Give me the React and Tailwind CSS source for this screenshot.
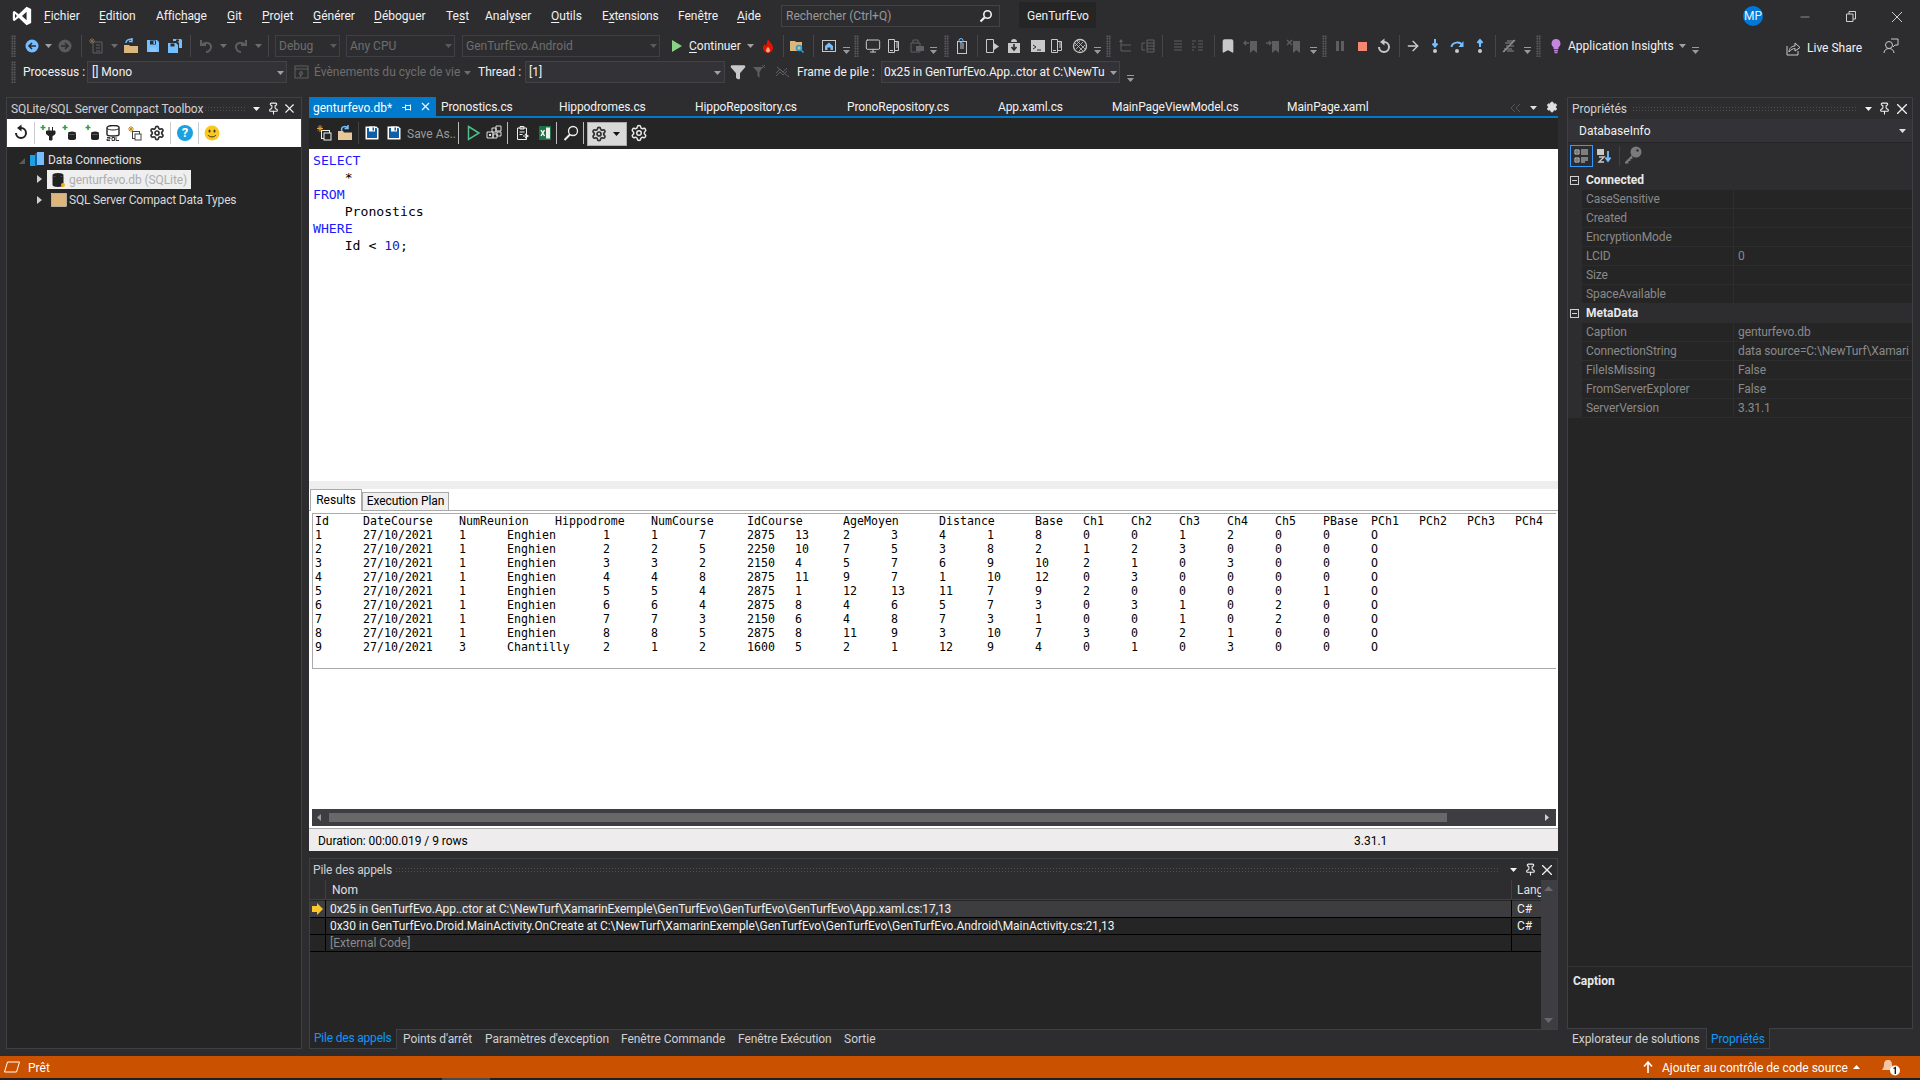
import React from "react";
import { ArrowRight, Bookmark, Monitor, Settings, Pin, X, Minus, Filter } from "lucide-react";

const T = ({ c, children }) => <span className={"absolute whitespace-nowrap leading-[16px] " + c}>{children}</span>;
const Ic = ({ c, children, vb = "0 0 16 16" }) => (
  <svg className={"absolute w-[16px] h-[16px] " + c} viewBox={vb} fill="none">{children}</svg>
);
const Caret = ({ c, col = "#a0a0a0" }) => (
  <svg className={"absolute w-[7px] h-[4px] " + c} viewBox="0 0 7 4"><polygon points="0,0 7,0 3.5,4" fill={col} /></svg>
);
const Mc = ({ c }) => (
  <svg className={"absolute w-[7px] h-[7px] " + c} viewBox="0 0 7 7"><rect x="0" y="0" width="7" height="1" fill="#9a9a9a" /><polygon points="0,3 7,3 3.5,7" fill="#9a9a9a" /></svg>
);
const Sep = ({ c, col = "bg-[#46464a]" }) => <div className={"absolute w-[1px] h-[22px] " + col + " " + c} />;
const Grip = ({ c }) => <div className={"absolute w-[5px] h-[22px] bg-[radial-gradient(circle,#5f5f63_0.8px,transparent_0.9px)] bg-[length:2.5px_2.5px] " + c} />;
const DotFill = ({ c }) => <div className={"absolute h-[7px] bg-[radial-gradient(circle,#505054_0.7px,transparent_0.8px)] bg-[length:3px_3px] " + c} />;
const U = ({ children }) => <span className="underline underline-offset-[2px] decoration-[1px]">{children}</span>;
const Restart = ({ c, col }) => (
  <Ic c={c}><path d="M8 4a5 5 0 1 1-5 5" stroke={col} strokeWidth="2" /><polygon points="8.500,0.500 8.500,7.500 4,4" fill={col} /></Ic>
);
const Floppy = ({ c, col = "#75beff" }) => (
  <Ic c={c}><path d="M2 2h10l2 2v10H2z" fill={col} /><rect x="5" y="2.5" width="6" height="4" fill="#2d2d30" /><rect x="8.5" y="3" width="1.5" height="3" fill={col} /><rect x="4.5" y="9.5" width="7" height="4.5" fill="#fff" opacity="0.15" /></Ic>
);
const SaveDark = ({ c }) => (
  <Ic c={c}><path d="M1.5 1.5h11l2 2v11h-13z" fill="#fff" /><path d="M3 3h9.5l.5.5V13H3z" fill="#0e5ea8" /><rect x="5" y="1.5" width="6" height="5" fill="#fff" /><rect x="8.5" y="2.5" width="1.5" height="3" fill="#0e5ea8" /><rect x="4.5" y="9" width="7" height="4" fill="#0e5ea8" /></Ic>
);
const GearI = ({ c, col = "#333" }) => (
  <Settings className={"absolute " + c} size={16} color={col} strokeWidth={2.6} />
);
const GreenPlus = () => <path d="M3 0v5M.5 2.500h5" stroke="#2ea043" strokeWidth="1.600" />;
const PhoneSplit = ({ c, col = "#c8c8c8" }) => (
  <Ic c={c}><path d="M3.5 1.5h6v13h-6zM9.5 3.5h4v9h-4z" stroke={col} /><path d="M5 12.5h3M11 5h2M11 7h2M11 9h2" stroke={col} /></Ic>
);

const header = { 0: "Id", 1: "DateCourse", 3: "NumReunion", 5: "Hippodrome", 7: "NumCourse", 9: "IdCourse", 11: "AgeMoyen", 13: "Distance", 15: "Base", 16: "Ch1", 17: "Ch2", 18: "Ch3", 19: "Ch4", 20: "Ch5", 21: "PBase", 22: "PCh1", 23: "PCh2", 24: "PCh3", 25: "PCh4" };
const rows = [
  "1,1,Enghien,1,1,7,2875,13,2,3,4,1,8,0,0,1,2,0,0,O",
  "2,1,Enghien,2,2,5,2250,10,7,5,3,8,2,1,2,3,0,0,0,O",
  "3,1,Enghien,3,3,2,2150,4,5,7,6,9,10,2,1,0,3,0,0,O",
  "4,1,Enghien,4,4,8,2875,11,9,7,1,10,12,0,3,0,0,0,0,O",
  "5,1,Enghien,5,5,4,2875,1,12,13,11,7,9,2,0,0,0,0,1,O",
  "6,1,Enghien,6,6,4,2875,8,4,6,5,7,3,0,3,1,0,2,0,O",
  "7,1,Enghien,7,7,3,2150,6,4,8,7,3,1,0,0,1,0,2,0,O",
  "8,1,Enghien,8,8,5,2875,8,11,9,3,10,7,3,0,2,1,0,0,O",
  "9,3,Chantilly,2,1,2,1600,5,2,1,12,9,4,0,1,0,3,0,0,O",
];
const GridRow = ({ cells }) => (
  <div className="grid grid-cols-[repeat(26,48px)] h-[14px] leading-[14px]">
    {Array.from({ length: 26 }, (_, i) => <span key={i} className="whitespace-pre overflow-visible">{cells[i] || ""}</span>)}
  </div>
);
const toCells = (s) => {
  const p = s.split(",");
  const out = { 0: p[0], 1: "27/10/2021", 3: p[1], 4: p[2] };
  p.slice(3).forEach((v, i) => { out[6 + i] = v; });
  return out;
};

function Header() {
  const menu = "text-[12px] text-[#f1f1f1]";
  return (
    <div className="relative h-[97px] text-[12px] text-[#f1f1f1]">
      <svg className="absolute left-[11px] top-[6px] w-[22px] h-[20px]" viewBox="0 0 24 24"><path fillRule="evenodd" d="M17.5 1 23 3.5v17L17.5 23 8 14.2 3 18l-2-1V7l2-1 5 3.8zM17.5 7 12 12l5.5 5zM3.6 9.4v5.2L6 12z" fill="#fff" /></svg>
      <T c={"left-[44px] top-[8px] " + menu}><U>F</U>ichier</T>
      <T c={"left-[99px] top-[8px] " + menu}><U>E</U>dition</T>
      <T c={"left-[156px] top-[8px] tracking-[-0.1px] " + menu}>Affic<U>h</U>age</T>
      <T c={"left-[227px] top-[8px] " + menu}><U>G</U>it</T>
      <T c={"left-[262px] top-[8px] " + menu}><U>P</U>rojet</T>
      <T c={"left-[313px] top-[8px] " + menu}><U>G</U>énérer</T>
      <T c={"left-[374px] top-[8px] " + menu}><U>D</U>éboguer</T>
      <T c={"left-[446px] top-[8px] " + menu}>Te<U>s</U>t</T>
      <T c={"left-[485px] top-[8px] " + menu}>Anal<U>y</U>ser</T>
      <T c={"left-[551px] top-[8px] " + menu}><U>O</U>utils</T>
      <T c={"left-[602px] top-[8px] tracking-[-0.2px] " + menu}>E<U>x</U>tensions</T>
      <T c={"left-[678px] top-[8px] " + menu}>Fenê<U>t</U>re</T>
      <T c={"left-[737px] top-[8px] " + menu}><U>A</U>ide</T>
      <div className="absolute left-[781px] top-[5px] w-[219px] h-[22px] border border-[#434346]" />
      <T c="left-[786px] top-[8px] text-[#999]">Rechercher (Ctrl+Q)</T>
      <svg className="absolute left-[979px] top-[9px] w-[14px] h-[14px]" viewBox="0 0 14 14" fill="none"><circle cx="8.5" cy="5.5" r="3.7" stroke="#f1f1f1" strokeWidth="1.6" /><path d="M5.5 8.5 1.5 12.5" stroke="#f1f1f1" strokeWidth="2.2" /></svg>
      <div className="absolute left-[1019px] top-[2px] w-[77px] h-[26px] bg-[#252526]" />
      <T c="left-[1027px] top-[8px]">GenTurfEvo</T>
      <div className="absolute left-[1743px] top-[6px] w-[20px] h-[20px] rounded-full bg-[#0078d7] flex items-center justify-center text-[12px] text-[#e8f2fb]">MP</div>
      <Minus className="absolute left-[1798px] top-[10px]" size={14} color="#d0d0d0" strokeWidth={1} />
      <svg className="absolute left-[1846px] top-[11px] w-[10px] h-[11px]" viewBox="0 0 10 11" fill="none"><path d="M.5 3h6.5v7.5H.5zM3 3V.5h6.5V8H7" stroke="#d0d0d0" /></svg>
      <svg className="absolute left-[1892px] top-[12px] w-[10px] h-[10px]" viewBox="0 0 10 10" fill="none"><path d="M0 0l10 10M10 0 0 10" stroke="#d0d0d0" /></svg>

      {/* toolbar row 1 */}
      <Grip c="left-[11px] top-[35px]" />
      <Ic c="left-[24px] top-[38px]"><circle cx="8" cy="8" r="6.5" fill="#75beff" /><path d="M12 8H5M8 5 5 8l3 3" stroke="#2d2d30" strokeWidth="1.6" /></Ic>
      <Caret c="left-[45px] top-[44px]" />
      <Ic c="left-[57px] top-[38px]"><circle cx="8" cy="8" r="6.5" fill="#5a5a5c" /><path d="M4 8h7M8 5l3 3-3 3" stroke="#2d2d30" strokeWidth="1.6" /></Ic>
      <Sep c="left-[81px] top-[35px]" />
      <Ic c="left-[88px] top-[38px]"><path d="M5 4h9v11H5z" stroke="#606062" /><path d="M8 7h4M8 10h4M8 13h4" stroke="#606062" /><path d="M4 0v6M1 3h6M2 1l4 4M6 1 2 5" stroke="#7a6a4a" /></Ic>
      <Caret c="left-[111px] top-[44px]" col="#6d6d6d" />
      <Ic c="left-[123px] top-[38px]"><path d="M1 7h5l1 1h8v7H1z" fill="#dcb67a" /><path d="M3 5c0-3 3-4 6-3.5M9 0v3.5h-3" stroke="#75beff" strokeWidth="1.5" /></Ic>
      <Floppy c="left-[145px] top-[38px]" />
      <Ic c="left-[167px] top-[38px]"><path d="M1 5h8l2 2v8H1z" fill="#75beff" /><rect x="3.5" y="5.5" width="4" height="3" fill="#2d2d30" /><path d="M6 1h8l1 1v8h-3V5L10 3H6z" fill="#75beff" /><rect x="9" y="1.5" width="3" height="2" fill="#2d2d30" /></Ic>
      <Sep c="left-[190px] top-[35px]" />
      <Ic c="left-[198px] top-[38px]"><path d="M3 2v5h5M4 7c2-3 8-3 9 1 .6 3-2 6-5 6" stroke="#5e5e60" strokeWidth="2" /></Ic>
      <Caret c="left-[220px] top-[44px]" col="#6d6d6d" />
      <Ic c="left-[233px] top-[38px]"><path d="M13 2v5H8M12 7c-2-3-8-3-9 1-.6 3 2 6 5 6" stroke="#5e5e60" strokeWidth="2" /></Ic>
      <Caret c="left-[255px] top-[44px]" col="#6d6d6d" />
      <Sep c="left-[268px] top-[35px]" />
      <div className="absolute left-[275px] top-[35px] w-[65px] h-[22px] border border-[#3f3f46]" />
      <T c="left-[279px] top-[38px] text-[#6d6d6d]">Debug</T>
      <Caret c="left-[330px] top-[44px]" col="#5a5a5a" />
      <div className="absolute left-[346px] top-[35px] w-[109px] h-[22px] border border-[#3f3f46]" />
      <T c="left-[350px] top-[38px] text-[#6d6d6d]">Any CPU</T>
      <Caret c="left-[445px] top-[44px]" col="#5a5a5a" />
      <div className="absolute left-[462px] top-[35px] w-[198px] h-[22px] border border-[#3f3f46]" />
      <T c="left-[466px] top-[38px] text-[#6d6d6d]">GenTurfEvo.Android</T>
      <Caret c="left-[650px] top-[44px]" col="#5a5a5a" />
      <svg className="absolute left-[672px] top-[40px] w-[10px] h-[12px]" viewBox="0 0 10 12"><polygon points="0,0 10,6 0,12" fill="#89d185" /></svg>
      <T c="left-[689px] top-[38px]"><U>C</U>ontinuer</T>
      <Caret c="left-[747px] top-[44px]" />
      <Ic c="left-[760px] top-[38px]"><path d="M8 1c1 3 5 5 5 9a5 5 0 0 1-10 0c0-2 1-3 2-4 0 1 .5 2 1 2 1-2 1-5 2-7z" fill="#e51400" /><path d="M8 9c1 1 2 2 2 3.5a2 2 0 0 1-4 0C6 11 7 10 8 9z" fill="#f4a58a" /></Ic>
      <Sep c="left-[783px] top-[35px]" />
      <Ic c="left-[789px] top-[38px]"><path d="M1 3h5l1 1h6v9H1z" fill="#dcb67a" /><circle cx="10" cy="10" r="2.5" stroke="#1ba1e2" strokeWidth="1.6" /><path d="M12 12l2.5 2.5" stroke="#1ba1e2" strokeWidth="1.6" /></Ic>
      <Sep c="left-[813px] top-[35px]" />
      <Ic c="left-[821px] top-[38px]"><rect x="1.5" y="2.5" width="13" height="11" stroke="#c8c8c8" /><path d="M8 4.5 4 8v4h2.5V9.5h3V12H12V8z" fill="#75beff" /></Ic>
      <Mc c="left-[843px] top-[47px]" />
      <Grip c="left-[854px] top-[35px]" />
      <Monitor className="absolute left-[865px] top-[38px]" size={16} color="#c8c8c8" strokeWidth={1.5} />
      <PhoneSplit c="left-[885px] top-[38px]" />
      <Ic c="left-[909px] top-[38px]"><path d="M2 5h9v9H2zM4 5V2h5v3" stroke="#606062" /><rect x="7" y="8" width="8" height="5" fill="#606062" /></Ic>
      <Mc c="left-[930px] top-[47px]" />
      <Grip c="left-[944px] top-[35px]" />
      <Ic c="left-[954px] top-[38px]"><rect x="3.5" y="3.5" width="9" height="12" stroke="#c8c8c8" /><path d="M6 6h4M6 8h4M6 10h4" stroke="#c8c8c8" /><circle cx="7" cy="2.5" r="2" stroke="#75beff" /></Ic>
      <Sep c="left-[977px] top-[35px]" />
      <Ic c="left-[984px] top-[38px]"><path d="M2.5 1.5h7v13h-7z" stroke="#c8c8c8" /><polygon points="10,5 15,8.5 10,12" fill="#c8c8c8" /></Ic>
      <Ic c="left-[1006px] top-[38px]"><path d="M2 5h12v10H2z" fill="#c8c8c8" /><path d="M5 4a3 3 0 0 1 6 0z" fill="#c8c8c8" /><path d="M8 6v5M5.5 9 8 12l2.5-3" stroke="#2d2d30" strokeWidth="1.6" /></Ic>
      <Ic c="left-[1030px] top-[38px]"><rect x="1" y="2" width="14" height="12" fill="#c8c8c8" /><path d="M3 7l3 2-3 2M7 12h4" stroke="#2d2d30" /></Ic>
      <PhoneSplit c="left-[1048px] top-[38px]" />
      <Ic c="left-[1072px] top-[38px]"><circle cx="8" cy="8" r="6.5" stroke="#c8c8c8" strokeWidth="1.3" /><path d="M3 5l8 8M5 3l8 8M8 3 3 8M11 4l-7 7M13 7l-6 6" stroke="#c8c8c8" strokeWidth=".8" /></Ic>
      <Mc c="left-[1094px] top-[47px]" />
      <Grip c="left-[1106px] top-[35px]" />
      <Ic c="left-[1118px] top-[38px]"><path d="M3 3v10h10M3 7h10" stroke="#606062" /><path d="M1 4l2-3 2 3z" fill="#606062" /></Ic>
      <Ic c="left-[1140px] top-[38px]"><path d="M7 2h7v12H7zM7 5h7M7 8h7M7 11h7M5 5H2v7h3" stroke="#606062" /></Ic>
      <Sep c="left-[1162px] top-[35px]" />
      <Ic c="left-[1170px] top-[38px]"><path d="M4 3h8M4 6h8M4 9h8M4 12h8" stroke="#5e5e60" /></Ic>
      <Ic c="left-[1190px] top-[38px]"><path d="M2 3h4M2 6h2M2 9h4M2 12h2M8 3h5M8 6h5M8 9h5M8 12h5" stroke="#5e5e60" /></Ic>
      <Sep c="left-[1214px] top-[35px]" />
      <Bookmark className="absolute left-[1220px] top-[38px]" size={16} color="#c8c8c8" fill="#c8c8c8" />
      <Ic c="left-[1243px] top-[38px]"><path d="M7 3h7v12l-3.5-3L7 15z" fill="#5e5e60" /><path d="M1 5h5M3 3 1 5l2 2" stroke="#5e5e60" strokeWidth="1.3" /></Ic>
      <Ic c="left-[1265px] top-[38px]"><path d="M7 3h7v12l-3.5-3L7 15z" fill="#5e5e60" /><path d="M1 5h5M4 3l2 2-2 2" stroke="#5e5e60" strokeWidth="1.3" /></Ic>
      <Ic c="left-[1286px] top-[38px]"><path d="M7 3h7v12l-3.5-3L7 15z" fill="#5e5e60" /><path d="M1 2l5 5M6 2 1 7" stroke="#5e5e60" strokeWidth="1.3" /></Ic>
      <Mc c="left-[1310px] top-[47px]" />
      <Grip c="left-[1322px] top-[35px]" />
      <div className="absolute left-[1336px] top-[41px] w-[3px] h-[10px] bg-[#5e5e60]" />
      <div className="absolute left-[1341px] top-[41px] w-[3px] h-[10px] bg-[#5e5e60]" />
      <div className="absolute left-[1358px] top-[42px] w-[9px] h-[9px] bg-[#f48771]" />
      <Restart c="left-[1376px] top-[38px]" col="#c8c8c8" />
      <Sep c="left-[1399px] top-[35px]" />
      <ArrowRight className="absolute left-[1405px] top-[38px]" size={16} color="#d0d0d0" strokeWidth={2} />
      <Ic c="left-[1427px] top-[38px]"><path d="M8 1v7M5.5 5.5 8 8.5l2.5-3" stroke="#75beff" strokeWidth="2" /><circle cx="8" cy="13" r="2" fill="#c8c8c8" /></Ic>
      <Ic c="left-[1449px] top-[38px]"><path d="M2.5 9C3 4 11 3 13 7" stroke="#75beff" strokeWidth="2" /><path d="M14.5 3v6h-5z" fill="#75beff" /><circle cx="8" cy="13" r="2" fill="#c8c8c8" /></Ic>
      <Ic c="left-[1472px] top-[38px]"><path d="M8 9V2M5.5 5 8 2l2.500 3" stroke="#75beff" strokeWidth="2" /><circle cx="8" cy="13" r="2" fill="#c8c8c8" /></Ic>
      <Sep c="left-[1495px] top-[35px]" />
      <Ic c="left-[1501px] top-[38px]"><path d="M3 14 13 2M6 13h7M3 11h8M5 8h8M4 5h8M6 3h7" stroke="#8a8a8a" /><path d="M2 14 14 2" stroke="#8a8a8a" strokeWidth="1.5" /></Ic>
      <Mc c="left-[1524px] top-[47px]" />
      <Grip c="left-[1536px] top-[35px]" />
      <Ic c="left-[1548px] top-[38px]"><path d="M8 1a4.5 4.500 0 0 0-2.500 8.200V11h5V9.200A4.500 4.500 0 0 0 8 1z" fill="#c586e0" /><path d="M6 12.500h4M6.500 14.500h3" stroke="#c586e0" strokeWidth="1.300" /></Ic>
      <T c="left-[1568px] top-[38px]">Application Insights</T>
      <Caret c="left-[1679px] top-[44px]" />
      <Mc c="left-[1692px] top-[47px]" />
      <Ic c="left-[1785px] top-[40px]"><path d="M2 6v9h11v-4" stroke="#c8c8c8" /><path d="M4 12c0-4 3-6 6-6V3l5 4.500L10 11V8.500c-2 0-4 1-6 3.500z" stroke="#c8c8c8" /></Ic>
      <T c="left-[1807px] top-[40px]">Live Share</T>
      <Ic c="left-[1883px] top-[38px]"><circle cx="6" cy="7" r="3.500" stroke="#c8c8c8" /><path d="M1 15c0-3 2.500-4.500 5-4.500s5 1.500 5 4.500" stroke="#c8c8c8" /><path d="M8 1h7v6h-3l-2 2" stroke="#c8c8c8" /></Ic>

      {/* toolbar row 2 */}
      <Grip c="left-[11px] top-[61px]" />
      <T c="left-[23px] top-[64px]">Processus :</T>
      <div className="absolute left-[87px] top-[61px] w-[200px] h-[22px] border border-[#434346] bg-[#333337]" />
      <T c="left-[92px] top-[64px]">[] Mono</T>
      <Caret c="left-[277px] top-[71px]" />
      <Ic c="left-[293px] top-[64px]"><rect x="2" y="2" width="13" height="12" stroke="#606062" /><path d="M2 5h13M8 7 6 10h2l-1 3 3-4H8l1-2" stroke="#606062" /></Ic>
      <T c="left-[314px] top-[64px] text-[#6d6d6d]">Évènements du cycle de vie</T>
      <Caret c="left-[464px] top-[71px]" col="#6d6d6d" />
      <T c="left-[478px] top-[64px]">Thread :</T>
      <div className="absolute left-[525px] top-[61px] w-[200px] h-[22px] border border-[#434346] bg-[#333337]" />
      <T c="left-[529px] top-[64px]">[1]</T>
      <Caret c="left-[714px] top-[71px]" />
      <Filter className="absolute left-[730px] top-[64px]" size={16} color="#c8c8c8" fill="#c8c8c8" />
      <Ic c="left-[752px] top-[64px]"><path d="M1 3h10L7.500 8v6l-2-2V8z" fill="#5e5e60" /><path d="M10 1l3 3M13 1l-3 3" stroke="#5e5e60" /></Ic>
      <Ic c="left-[775px] top-[64px]"><path d="M1 9l4-4 3 3 4-4M1 12l4-4 3 3 4-4M2 3l12 10" stroke="#5e5e60" /></Ic>
      <T c="left-[797px] top-[64px]">Frame de pile :</T>
      <div className="absolute left-[881px] top-[61px] w-[239px] h-[22px] border border-[#434346] bg-[#333337]" />
      <T c="left-[884px] top-[64px] tracking-[-0.1px]">0x25 in GenTurfEvo.App..ctor at C:\NewTu</T>
      <Caret c="left-[1110px] top-[71px]" />
      <Mc c="left-[1127px] top-[75px]" />
    </div>
  );
}

function LeftPanel() {
  return (
    <div className="relative w-[296px] h-[952px] ml-[6px] border border-[#3f3f46] bg-[#252526] text-[12px] tracking-[-0.1px]">
      <div className="relative h-[21px] bg-[#2d2d30]">
        <T c="left-[4px] top-[3px] text-[#d0d0d0]">SQLite/SQL Server Compact Toolbox</T>
        <DotFill c="left-[197px] top-[8px] w-[42px]" />
        <Caret c="left-[246px] top-[9px]" col="#f1f1f1" />
        <Pin className="absolute left-[260px] top-[4px]" size={13} color="#f1f1f1" strokeWidth={2} />
        <X className="absolute left-[275px] top-[3px]" size={15} color="#f1f1f1" strokeWidth={1.8} />
      </div>
      <div className="relative h-[28px] bg-white">
        <Restart c="left-[6px] top-[5px]" col="#222" />
        <Sep c="left-[27px] top-[3px]" col="bg-[#ccc]" />
        <Ic c="left-[33px] top-[6px]"><GreenPlus /><path d="M9 2v4M12.500 2v4M6.500 6h8.500v3l-3 2v4h-2.500v-4l-3-2z" fill="#222" stroke="#222" /></Ic>
        <Ic c="left-[55px] top-[6px]"><GreenPlus /><ellipse cx="10" cy="8" rx="4" ry="1.600" fill="#222" /><path d="M6 8v5.500c0 1 1.800 1.500 4 1.500s4-.5 4-1.500V8c0 1-1.800 1.500-4 1.500S6 9 6 8z" fill="#222" /></Ic>
        <Ic c="left-[78px] top-[6px]"><GreenPlus /><ellipse cx="10" cy="8" rx="4" ry="1.600" fill="#222" /><path d="M6 8v5.500c0 1 1.800 1.500 4 1.500s4-.5 4-1.500V8c0 1-1.800 1.500-4 1.500S6 9 6 8z" fill="#222" /></Ic>
        <Ic c="left-[98px] top-[6px]"><path d="M2 2.500C2 1.500 4.500.5 8 .5s6 1 6 2v7c0 1-2.500 1.500-6 1.500s-6-.5-6-1.500z" stroke="#222" strokeWidth="1.400" /><path d="M2 3.500c1 1 4 1.500 6 1.500s5-.5 6-1.500" stroke="#222" /><path d="M2 12.500h3v1.500H2v1.500h3M7 12.500h2.500v3H7zM11 12v3.500h3" stroke="#222" strokeWidth=".9" /></Ic>
        <Ic c="left-[120px] top-[6px]"><rect x="5.500" y="6.500" width="7" height="7" stroke="#444" /><rect x="8" y="9" width="6" height="6" fill="#fff" stroke="#444" /><path d="M4 1v6M1 4h6M2 2l4 4M6 2 2 6" stroke="#c98a10" /></Ic>
        <GearI c="left-[142px] top-[6px]" />
        <Sep c="left-[163px] top-[3px]" col="bg-[#ccc]" />
        <div className="absolute left-[170px] top-[6px] w-[16px] h-[16px] rounded-full bg-[#1ba1e2] text-white text-[13px] font-bold leading-[16px] text-center">?</div>
        <Sep c="left-[191px] top-[3px]" col="bg-[#ccc]" />
        <Ic c="left-[197px] top-[6px]"><circle cx="8" cy="8" r="7.500" fill="#f9c81e" /><ellipse cx="5.500" cy="6" rx="1" ry="1.600" fill="#333" /><ellipse cx="10.500" cy="6" rx="1" ry="1.600" fill="#333" /><path d="M4 10c1.500 2.500 6.500 2.500 8 0" stroke="#333" /></Ic>
      </div>
      <div className="relative">
        <svg className="absolute left-[12px] top-[11px] w-[6px] h-[6px]" viewBox="0 0 6 6"><polygon points="6,0 6,6 0,6" fill="#5a5a5a" /></svg>
        <Ic c="left-[22px] top-[4px]"><rect x="1" y="4" width="7" height="11" fill="#1ba1e2" /><rect x="8" y="1" width="7" height="13" fill="#75beff" /><rect x="6" y="2" width="2" height="13" fill="#0e5ea8" /></Ic>
        <T c="left-[41px] top-[5px] text-[#e0e0e0]">Data Connections</T>
        <svg className="absolute left-[30px] top-[28px] w-[5px] h-[8px]" viewBox="0 0 5 8"><polygon points="0,0 5,4 0,8" fill="#d0d0d0" /></svg>
        <div className="absolute left-[40px] top-[23px] w-[144px] h-[19px] bg-[#efefef]" />
        <Ic c="left-[44px] top-[25px]"><ellipse cx="7" cy="3" rx="5.500" ry="2" fill="#222" /><path d="M1.500 3v10c0 1 2.500 2 5.500 2s5.500-1 5.500-2V3c0 1-2.500 2-5.500 2s-5.500-1-5.500-2z" fill="#222" /><circle cx="12" cy="13" r="2" fill="#f0b400" /></Ic>
        <T c="left-[62px] top-[25px] text-[#aeaeae]">genturfevo.db (SQLite)</T>
        <svg className="absolute left-[30px] top-[49px] w-[5px] h-[8px]" viewBox="0 0 5 8"><polygon points="0,0 5,4 0,8" fill="#d0d0d0" /></svg>
        <Ic c="left-[44px] top-[45px]"><rect x="0.500" y="1.500" width="15" height="13" fill="#dcb67a" stroke="#eee" strokeWidth=".5" /></Ic>
        <T c="left-[62px] top-[45px] text-[#d8d8d8] tracking-[-0.18px]">SQL Server Compact Data Types</T>
      </div>
    </div>
  );
}

function Center() {
  const tab = "top-[2px] text-[#f1f1f1] tracking-[-0.1px]";
  const sqlBlue = "text-[#1a1aff]";
  return (
    <div className="relative w-[1249px] h-[952px] ml-[7px] text-[12px]">
      {/* tabs */}
      <div className="absolute left-0 top-0 w-[127px] h-[19px] bg-[#007acc] text-white">
        <T c="left-[4px] top-[3px]">genturfevo.db*</T>
        <svg className="absolute left-[93px] top-[6px] w-[11px] h-[9px]" viewBox="0 0 11 9" fill="none"><path d="M0 4.500h3M3.500 1.500v6M3.500 2.500h5v4h-5M8.500 1.500v6" stroke="#fff" /></svg>
        <X className="absolute left-[110px] top-[3px]" size={13} color="#fff" strokeWidth={2} />
      </div>
      <T c={"left-[132px] " + tab}>Pronostics.cs</T>
      <T c={"left-[250px] " + tab}>Hippodromes.cs</T>
      <T c={"left-[386px] " + tab}>HippoRepository.cs</T>
      <T c={"left-[538px] " + tab}>PronoRepository.cs</T>
      <T c={"left-[689px] " + tab}>App.xaml.cs</T>
      <T c={"left-[803px] " + tab}>MainPageViewModel.cs</T>
      <T c={"left-[978px] " + tab}>MainPage.xaml</T>
      <svg className="absolute left-[1202px] top-[7px] w-[10px] h-[8px]" viewBox="0 0 10 8" fill="none"><path d="M4 0 0 4l4 4M9 0 5 4l4 4" stroke="#555" /></svg>
      <Caret c="left-[1221px] top-[9px]" col="#e0e0e0" />
      <Settings className="absolute left-[1237px] top-[4px]" size={12} color="#e0e0e0" fill="#e0e0e0" strokeWidth={2} />
      <div className="absolute left-0 top-[19px] w-[1249px] h-[2px] bg-[#007acc]" />
      {/* editor toolbar */}
      <div className="absolute left-0 top-[21px] w-[1249px] h-[31px] bg-[#252526]">
        <Ic c="left-[7px] top-[7px]"><rect x="5.500" y="5.500" width="8" height="8" stroke="#eee" /><rect x="8" y="8" width="7" height="7" fill="#252526" stroke="#eee" /><path d="M4 0v7M1 3.500h6M2 1.500l4 4M6 1.500l-4 4" stroke="#e5a33c" /></Ic>
        <Ic c="left-[28px] top-[7px]"><path d="M1 6h5l1 1.500h8V15H1z" fill="#e8c89b" /><path d="M5 6c-2-4 3-6 6-3M11 0v3.500H7.500" stroke="#75beff" strokeWidth="1.500" /></Ic>
        <Sep c="left-[49px] top-[4px]" col="bg-[#444]" />
        <SaveDark c="left-[55px] top-[7px]" />
        <SaveDark c="left-[77px] top-[7px]" />
        <T c="left-[98px] top-[8px] text-[#9a9a9a]">Save As..</T>
        <Sep c="left-[149px] top-[4px]" col="bg-[#bbb]" />
        <Ic c="left-[157px] top-[7px]"><path d="M2.500 1.500 13 8 2.500 14.500z" stroke="#4ec08d" strokeWidth="1.500" /></Ic>
        <Ic c="left-[177px] top-[7px]"><path d="M1 7h6v6H1zM6 3h4v4H6zM10 1h5v5h-5zM7 9h4v4H7zM11 7h4v4h-4z" stroke="#e0e0e0" /><path d="M3 9h2v2H3z" fill="#e0e0e0" /></Ic>
        <Sep c="left-[198px] top-[4px]" col="bg-[#bbb]" />
        <Ic c="left-[206px] top-[7px]"><path d="M2.500 3h9v11.500h-9zM5 1.500h4V4H5zM4.500 7h5M4.500 9.500h3" stroke="#eee" /><path d="M8 11h4M10 9l3 2-3 2" stroke="#eee" strokeWidth="1.200" /></Ic>
        <Ic c="left-[228px] top-[7px]"><rect x="2" y="1" width="12" height="14" fill="#1e7145" /><rect x="9" y="2.500" width="4" height="11" fill="#eee" /><path d="M4 5l3.500 6M7.500 5 4 11" stroke="#fff" strokeWidth="1.400" /></Ic>
        <Sep c="left-[247px] top-[4px]" col="bg-[#bbb]" />
        <Ic c="left-[254px] top-[7px]"><circle cx="10" cy="6" r="4.500" stroke="#eee" strokeWidth="1.300" /><path d="M7 9.500 1.500 15" stroke="#eee" strokeWidth="2" /></Ic>
        <Sep c="left-[274px] top-[4px]" col="bg-[#bbb]" />
        <div className="absolute left-[278px] top-[4px] w-[40px] h-[24px] bg-[#d8d8d8] border border-[#aaa]" />
        <GearI c="left-[282px] top-[8px]" col="#333" />
        <Caret c="left-[304px] top-[14px]" col="#111" />
        <Settings className="absolute left-[321px] top-[6px]" size={18} color="#e8e8e8" strokeWidth={2} />
      </div>
      {/* white area */}
      <div className="absolute left-0 top-[52px] w-[1249px] h-[702px] bg-white text-[#111]">
        <div className="absolute left-[4px] top-[3px] font-[family-name:DejaVu_Sans_Mono] text-[13.15px] leading-[17px] whitespace-pre text-black">
          <div className={sqlBlue}>SELECT</div>
          <div>{"    *"}</div>
          <div className={sqlBlue}>FROM</div>
          <div>{"    Pronostics"}</div>
          <div className={sqlBlue}>WHERE</div>
          <div>{"    Id < "}<span className="text-[#1a1ab0]">10</span>;</div>
        </div>
        <div className="absolute left-0 top-[332px] w-full h-[8px] bg-[#eeeeee]" />
        <div className="absolute left-0 top-[361px] w-full h-[1px] bg-[#aaaaaa]" />
        <div className="absolute left-[1px] top-[340px] w-[52px] h-[22px] bg-white border-x border-t border-[#aaaaaa] text-black text-center leading-[20px]">Results</div>
        <div className="absolute left-[53px] top-[343px] w-[87px] h-[18px] bg-[#f0f0f0] border-x border-t border-[#aaaaaa] text-black text-center leading-[17px] tracking-[-0.1px]">Execution Plan</div>
        <div className="absolute left-[3px] top-[364px] w-[1244px] h-[156px] border-y border-l border-[#aaaaaa] pl-[2px] font-[family-name:DejaVu_Sans_Mono] text-[11.6px] text-black overflow-hidden">
          <GridRow cells={header} />
          {rows.map((r) => <GridRow key={r} cells={toCells(r)} />)}
        </div>
        <div className="absolute left-[3px] top-[660px] w-[1244px] h-[17px] bg-[#3e3e42]">
          <div className="absolute left-[17px] top-[4px] w-[1118px] h-[9px] bg-[#686868]" />
          <svg className="absolute left-[5px] top-[5px] w-[4px] h-[7px]" viewBox="0 0 4 7"><polygon points="4,0 4,7 0,3.500" fill="#999" /></svg>
          <svg className="absolute left-[1233px] top-[5px] w-[4px] h-[7px]" viewBox="0 0 4 7"><polygon points="0,0 0,7 4,3.500" fill="#d0d0d0" /></svg>
        </div>
        <div className="absolute left-0 top-[679px] w-full h-[1px] bg-[#aaaaaa]" />
        <div className="absolute left-0 top-[680px] w-full h-[22px] bg-[#eeecec] text-black">
          <T c="left-[9px] top-[4px] tracking-[-0.05px]">Duration: 00:00.019 / 9 rows</T>
          <T c="left-[1045px] top-[4px]">3.31.1</T>
        </div>
      </div>
      {/* call stack */}
      <div className="absolute left-0 top-[761px] w-[1249px] h-[172px] border border-[#3f3f46] bg-[#252526]">
        <div className="relative h-[21px] bg-[#2d2d30]">
          <T c="left-[3px] top-[3px] text-[#d0d0d0] tracking-[-0.1px]">Pile des appels</T>
          <DotFill c="left-[85px] top-[8px] w-[1105px]" />
          <Caret c="left-[1200px] top-[9px]" col="#f1f1f1" />
          <Pin className="absolute left-[1214px] top-[4px]" size={13} color="#f1f1f1" strokeWidth={2} />
          <svg className="absolute left-[1232px] top-[6px] w-[10px] h-[10px]" viewBox="0 0 10 10" fill="none"><path d="M0 0l10 10M10 0 0 10" stroke="#f1f1f1" strokeWidth="1.300" /></svg>
        </div>
        <div className="absolute left-0 top-[21px] w-[1231px] h-[19px] bg-[#2d2d30]">
          <div className="absolute left-[15px] top-0 w-[1px] h-[19px] bg-[#3f3f46]" />
          <div className="absolute left-0 top-[19px] w-full h-[1px] bg-[#3f3f46]" />
          <T c="left-[22px] top-[2px] text-[#e0e0e0]">Nom</T>
          <div className="absolute left-[1201px] top-0 w-[1px] h-[19px] bg-[#3f3f46]" />
          <T c="left-[1207px] top-[2px] text-[#e0e0e0]">Lang</T>
        </div>
        <div className="absolute left-0 top-[42px] w-[1231px] h-[16px] bg-[#3d3d40]">
          <svg className="absolute left-[2px] top-[2px] w-[12px] h-[12px]" viewBox="0 0 12 12"><path d="M0 3h5V0l6 6-6 6V9H0z" fill="#fbc62a" /></svg>
          <T c="left-[20px] top-0 text-[#f1f1f1] tracking-[-0.1px]">0x25 in GenTurfEvo.App..ctor at C:\NewTurf\XamarinExemple\GenTurfEvo\GenTurfEvo\GenTurfEvo\App.xaml.cs:17,13</T>
          <T c="left-[1207px] top-0 text-[#f1f1f1]">C#</T>
        </div>
        <div className="absolute left-0 top-[59px] w-[1231px] h-[16px]">
          <T c="left-[20px] top-0 text-[#f1f1f1] tracking-[-0.06px]">0x30 in GenTurfEvo.Droid.MainActivity.OnCreate at C:\NewTurf\XamarinExemple\GenTurfEvo\GenTurfEvo\GenTurfEvo.Android\MainActivity.cs:21,13</T>
          <T c="left-[1207px] top-0 text-[#f1f1f1]">C#</T>
        </div>
        <div className="absolute left-0 top-[76px] w-[1231px] h-[16px]">
          <T c="left-[20px] top-0 text-[#8a8a8a]">[External Code]</T>
        </div>
        <div className="absolute left-0 top-[58px] w-[1231px] h-[1px] bg-black" />
        <div className="absolute left-0 top-[75px] w-[1231px] h-[1px] bg-black" />
        <div className="absolute left-0 top-[92px] w-[1231px] h-[1px] bg-black" />
        <div className="absolute left-[15px] top-[41px] w-[1px] h-[51px] bg-black" />
        <div className="absolute left-[1201px] top-[41px] w-[1px] h-[51px] bg-black" />
        <div className="absolute left-[1231px] top-[21px] w-[16px] h-[149px] bg-[#3e3e42]">
          <svg className="absolute left-[3px] top-[6px] w-[9px] h-[5px]" viewBox="0 0 9 5"><polygon points="0,5 9,5 4.500,0" fill="#68686c" /></svg>
          <svg className="absolute left-[3px] top-[138px] w-[9px] h-[5px]" viewBox="0 0 9 5"><polygon points="0,0 9,0 4.500,5" fill="#68686c" /></svg>
        </div>
      </div>
      {/* bottom tabs */}
      <div className="absolute left-0 top-[932px] w-[88px] h-[20px] bg-[#252526] border-x border-b border-[#3f3f46] tracking-[-0.2px]">
        <T c="left-[4px] top-[1px] text-[#0e97f8]">Pile des appels</T>
      </div>
      <T c="left-[94px] top-[934px] text-[#d0d0d0] tracking-[-0.1px]">Points d'arrêt</T>
      <T c="left-[176px] top-[934px] text-[#d0d0d0] tracking-[-0.05px]">Paramètres d'exception</T>
      <T c="left-[312px] top-[934px] text-[#d0d0d0] tracking-[-0.05px]">Fenêtre Commande</T>
      <T c="left-[429px] top-[934px] text-[#d0d0d0] tracking-[-0.1px]">Fenêtre Exécution</T>
      <T c="left-[535px] top-[934px] text-[#d0d0d0]">Sortie</T>
    </div>
  );
}

const Prop = ({ n, v }) => (
  <div className="relative h-[19px] ml-[14px] bg-[#252526] border-b border-[#2d2d30]">
    <T c="left-[4px] top-[1px] text-[#8a8a8a] tracking-[-0.1px]">{n}</T>
    <div className="absolute left-[151px] top-0 w-[1px] h-[19px] bg-[#2d2d30]" />
    {v && <T c="left-[156px] top-[1px] text-[#8a8a8a] tracking-[-0.1px]">{v}</T>}
  </div>
);
const Group = ({ n }) => (
  <div className="relative h-[19px]">
    <svg className="absolute left-[2px] top-[5px] w-[9px] h-[9px]" viewBox="0 0 9 9" fill="none"><rect x=".5" y=".5" width="8" height="8" stroke="#d0d0d0" /><path d="M2 4.500h5" stroke="#d0d0d0" /></svg>
    <T c="left-[18px] top-[1px] font-bold text-[#e8e8e8]">{n}</T>
  </div>
);

function RightPanel() {
  return (
    <div className="relative w-[346px] h-[952px] ml-[9px] text-[12px]">
      <div className="absolute left-0 top-0 w-[346px] h-[932px] border border-[#3f3f46] bg-[#252526]">
        <div className="relative h-[21px] bg-[#2d2d30]">
          <T c="left-[4px] top-[3px] text-[#d0d0d0]">Propriétés</T>
          <DotFill c="left-[64px] top-[8px] w-[226px]" />
          <Caret c="left-[297px] top-[9px]" col="#f1f1f1" />
          <Pin className="absolute left-[310px] top-[4px]" size={13} color="#f1f1f1" strokeWidth={2} />
          <svg className="absolute left-[329px] top-[6px] w-[10px] h-[10px]" viewBox="0 0 10 10" fill="none"><path d="M0 0l10 10M10 0 0 10" stroke="#f1f1f1" strokeWidth="1.300" /></svg>
        </div>
        <div className="relative h-[24px] bg-[#333337] border-b border-[#252526]">
          <T c="left-[11px] top-[4px] text-[#f1f1f1]">DatabaseInfo</T>
          <Caret c="left-[331px] top-[10px]" col="#e0e0e0" />
        </div>
        <div className="relative h-[24px] bg-[#2d2d30]">
          <div className="absolute left-[2px] top-[2px] w-[23px] h-[22px] border border-[#3399ff]" />
          <Ic c="left-[5px] top-[5px]"><path d="M2 2h4v4H2zM2 10h4v4H2z" stroke="#d0d0d0" /><path d="M3 4h2M3 12h2M8 2h7M8 4h7M8 6h7M8 10h7M8 12h7M8 14h4" stroke="#d0d0d0" /></Ic>
          <Ic c="left-[28px] top-[5px]"><rect x="1" y="1" width="7" height="6" fill="#c8c8c8" /><path d="M3 9h5L3 14h5" stroke="#c8c8c8" strokeWidth="1.400" /><path d="M12 3v9M9.500 9.500 12 13l2.500-3.500" stroke="#75beff" strokeWidth="1.800" /></Ic>
          <div className="absolute left-[51px] top-[3px] w-[1px] h-[20px] bg-[#3f3f46]" />
          <svg className="absolute left-[56px] top-[3px] w-[18px] h-[18px]" viewBox="0 0 18 18"><circle cx="12" cy="6" r="5.500" fill="#7a7a7a" /><path d="M8 9 1 16v1.500h3.500V15h2v-2h2z" fill="#7a7a7a" /><circle cx="13.500" cy="4.500" r="1.200" fill="#2d2d30" /></svg>
        </div>
        <div className="bg-[#2d2d30] pt-[4px]">
          <Group n="Connected" />
          <Prop n="CaseSensitive" />
          <Prop n="Created" />
          <Prop n="EncryptionMode" />
          <Prop n="LCID" v="0" />
          <Prop n="Size" />
          <Prop n="SpaceAvailable" />
          <Group n="MetaData" />
          <Prop n="Caption" v="genturfevo.db" />
          <Prop n="ConnectionString" v="data source=C:\NewTurf\Xamari" />
          <Prop n="FileIsMissing" v="False" />
          <Prop n="FromServerExplorer" v="False" />
          <Prop n="ServerVersion" v="3.31.1" />
        </div>
        <div className="absolute left-0 top-[868px] w-full h-[1px] bg-[#333337]" />
        <T c="left-[5px] top-[875px] font-bold text-[#e8e8e8]">Caption</T>
      </div>
      <T c="left-[5px] top-[934px] text-[#d0d0d0] tracking-[-0.05px]">Explorateur de solutions</T>
      <div className="absolute left-[139px] top-[931px] w-[64px] h-[21px] bg-[#252526] border-x border-b border-[#3f3f46] tracking-[-0.1px]">
        <T c="left-[4px] top-[3px] text-[#0e97f8]">Propriétés</T>
      </div>
    </div>
  );
}

export default function App() {
  return (
    <div className="w-[1920px] h-[1080px] overflow-hidden bg-[#2d2d30] font-[family-name:Roboto] text-[12px]">
      <Header />
      <div className="flex h-[959px]">
        <LeftPanel />
        <Center />
        <RightPanel />
      </div>
      <div className="relative h-[22px] bg-[#ca5100] text-white">
        <svg className="absolute left-[4px] top-[5px] w-[16px] h-[12px]" viewBox="0 0 16 12" fill="none"><path d="M3.500 1h12l-3 10H.5z" stroke="#fff" /></svg>
        <T c="left-[28px] top-[4px]">Prêt</T>
        <svg className="absolute left-[1643px] top-[5px] w-[10px] h-[12px]" viewBox="0 0 10 12" fill="none"><path d="M5 12V2M1 5.500 5 1l4 4.500" stroke="#fff" strokeWidth="1.600" /></svg>
        <T c="left-[1662px] top-[4px]">Ajouter au contrôle de code source</T>
        <Caret c="left-[1853px] top-[9px] rotate-180" col="#fff" />
        <svg className="absolute left-[1882px] top-[3px] w-[20px] h-[17px]" viewBox="0 0 20 17"><path d="M6 1c3 0 4 2 4 5s2 4 2 5H0c0-1 2-2 2-5s1-5 4-5z" fill="#f0c8a8" /><circle cx="13" cy="11.500" r="5" fill="#fff" /><path d="M11.500 9.500 13.300 8.500v6.500" stroke="#111" strokeWidth="1.300" fill="none" /></svg>
      </div>
      <div className="relative h-[2px] bg-[#1f1f1f]">
        <div className="absolute left-[442px] top-0 w-[48px] h-[2px] bg-[#4a4a4a]" />
      </div>
    </div>
  );
}
